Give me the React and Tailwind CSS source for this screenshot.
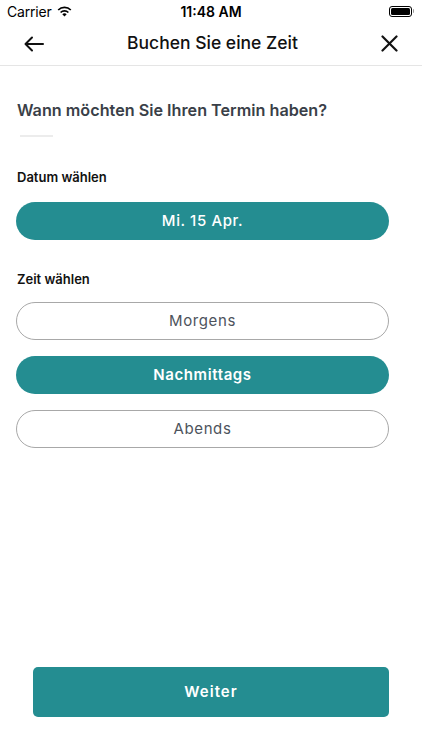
import React, { useState } from 'react'

const teal = 'bg-[#248d91]'

const StatusBar = () => (
  <div className="flex h-[22px] items-center justify-between px-[7px] text-[14px] text-black">
    <div className="flex w-[120px] items-center gap-[5px]">
      <span className="text-[14px] tracking-[-0.2px]">Carrier</span>
      <svg width="15" height="11" viewBox="0 0 15 11">
        <path d="M7.5 10.5 L5.3 8.2 A3.2 3.2 0 0 1 9.7 8.2 Z" fill="#000" />
        <path d="M3.6 6.5 A5.6 5.6 0 0 1 11.4 6.5" stroke="#000" strokeWidth="1.7" fill="none" />
        <path d="M1.2 4 A9 9 0 0 1 13.8 4" stroke="#000" strokeWidth="1.7" fill="none" />
      </svg>
    </div>
    <span className="font-semibold text-[14px]">11:48 AM</span>
    <div className="flex w-[120px] justify-end pr-[1px]">
      <div className="flex items-center">
        <div className="h-[11px] w-[23px] rounded-[3px] border border-black p-[1px]">
          <div className="h-full w-full rounded-[1.5px] bg-black" />
        </div>
        <div className="ml-[1px] h-[4px] w-[1.5px] rounded-r bg-black/40" />
      </div>
    </div>
  </div>
)

const NavBar = () => (
  <div className="flex h-[44px] items-center justify-between border-b border-[#e5e5e5] px-[24px]">
    <svg width="20" height="16" viewBox="0 0 20 16" fill="none" stroke="#111" strokeWidth="2" strokeLinecap="round" strokeLinejoin="round">
      <path d="M19 8H2" />
      <path d="M8 1.5L1.5 8L8 14.5" />
    </svg>
    <h1 className="text-[17.5px] font-medium text-[#111]">Buchen Sie eine Zeit</h1>
    <svg width="17" height="17" viewBox="0 0 17 17" fill="none" stroke="#111" strokeWidth="2.2" strokeLinecap="round">
      <path d="M1.5 1.5L15.5 15.5" />
      <path d="M15.5 1.5L1.5 15.5" />
    </svg>
  </div>
)

const Pill = ({ label, active, onClick }) => (
  <button
    onClick={onClick}
    className={
      active
        ? 'flex h-[38px] w-full items-center justify-center rounded-full bg-[#248d91] text-[15px] font-semibold tracking-[0.6px] text-white'
        : 'flex h-[38px] w-full items-center justify-center rounded-full border border-[#a8a8a8] bg-white text-[15px] tracking-[0.6px] text-[#4d535c]'
    }
  >
    {label}
  </button>
)

export default function App() {
  const [time, setTime] = useState('Nachmittags')

  return (
    <div className="flex h-[750px] w-full flex-col bg-white font-['Inter',sans-serif]">
      <StatusBar />
      <NavBar />

      <main className="flex flex-1 flex-col px-[16px]">
        <h2 className="mt-[32px] pl-[1px] text-[16.2px] font-semibold text-[#3a3f48]">
          Wann möchten Sie Ihren Termin haben?
        </h2>
        <div className="ml-[4px] mt-[13px] h-[2px] w-[33px] bg-[#ececec]" />

        <p className="mt-[31px] pl-[1px] text-[13px] font-semibold text-[#111]">Datum wählen</p>
        <div className="mt-[14px] pr-[17px]">
          <button className={`flex h-[38px] w-full items-center justify-center rounded-full ${teal} text-[15px] font-medium tracking-[0.6px] text-white`}>
            Mi. 15 Apr.
          </button>
        </div>

        <p className="mt-[30px] pl-[1px] text-[13px] font-semibold text-[#111]">Zeit wählen</p>
        <div className="mt-[13px] flex flex-col gap-[16px] pr-[17px]">
          {['Morgens', 'Nachmittags', 'Abends'].map((t) => (
            <Pill key={t} label={t} active={time === t} onClick={() => setTime(t)} />
          ))}
        </div>

        <div className="mt-auto mb-[33px] px-[17px] pr-[17px]">
          <button className={`flex h-[50px] w-full items-center justify-center rounded-[5px] ${teal} text-[15px] font-semibold tracking-[1px] text-white`}>
            Weiter
          </button>
        </div>
      </main>
    </div>
  )
}
